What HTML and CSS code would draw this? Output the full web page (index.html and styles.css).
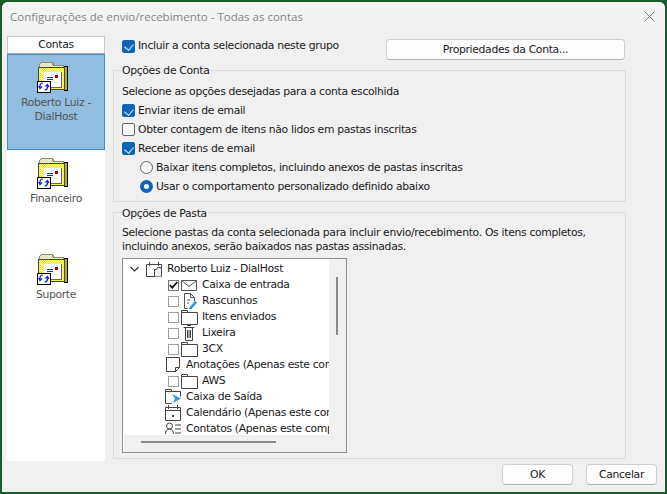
FILE: index.html
```html
<!DOCTYPE html>
<html lang="pt-BR">
<head>
<meta charset="utf-8">
<title>Configurações de envio/recebimento</title>
<link rel="stylesheet" href="styles.css">
</head>
<body>
<svg class="defs" width="0" height="0" aria-hidden="true">
  <defs>
    <pattern id="dither" width="2" height="2" patternUnits="userSpaceOnUse">
      <rect width="2" height="2" fill="#e8e830"/>
      <rect width="1" height="1" fill="#fbfb98"/>
      <rect x="1" y="1" width="1" height="1" fill="#fbfb98"/>
    </pattern>
    <symbol id="acct" viewBox="0 0 38 32">
      <g shape-rendering="crispEdges">
        <path d="M4 1h12v1h1v2h10v3H2V3h1V2h1z" fill="#8c8c70"/>
        <path d="M4 2h11v2h1v1h10v2H3V3h1z" fill="#ece8c8"/>
        <rect x="27" y="5" width="4" height="25" fill="#000"/>
        <rect x="28" y="6" width="2" height="23" fill="#b8b800"/>
        <rect x="1" y="6" width="27" height="23" fill="#444"/>
        <rect x="2" y="7" width="25" height="21" fill="url(#dither)"/>
        <rect x="7" y="11" width="18" height="16" fill="#666"/>
        <rect x="7" y="11" width="17" height="15" fill="#fff"/>
        <rect x="18" y="14" width="3" height="3" fill="#b00000"/>
        <rect x="10" y="16" width="6" height="1" fill="#1c34c8"/>
        <rect x="10" y="18" width="6" height="1" fill="#1c34c8"/>
        <rect x="0" y="20" width="14" height="12" fill="#000"/>
        <rect x="1" y="21" width="12" height="10" fill="#fff"/>
      </g>
      <path d="M3 27v-2a3 3 0 0 1 3-3M1.500 25l1.500 2.500 2-2" fill="none" stroke="#1020d0" stroke-width="1.200"/>
      <path d="M10.500 24v2a3 3 0 0 1-3 3M12 26l-1.500-2.500-2 2" fill="none" stroke="#1020d0" stroke-width="1.200"/>
    </symbol>
    <symbol id="folder" viewBox="0 0 17 16">
      <path d="M.500 15.500V1.500h6v2h10v12z" fill="none" stroke="#444"/>
      <path d="M.500 3.500h6" stroke="#444"/>
    </symbol>
  </defs>
</svg>
<div class="window">
  <header class="titlebar">
    <span class="title">Configurações de envio/recebimento - Todas as contas</span>
    <svg class="close" width="11" height="11" viewBox="0 0 11 11"><path d="M.5.500l10 10M10.500.500l-10 10" stroke="#777" fill="none"/></svg>
  </header>
  <div class="content">
    <aside class="sidebar">
      <div class="side-head">Contas</div>
      <div class="side-item selected">
        <svg class="acct" width="38" height="32"><use href="#acct"/></svg>
        <span>Roberto Luiz -<br>DialHost</span>
      </div>
      <div class="side-item">
        <svg class="acct" width="38" height="32"><use href="#acct"/></svg>
        <span>Financeiro</span>
      </div>
      <div class="side-item">
        <svg class="acct" width="38" height="32"><use href="#acct"/></svg>
        <span>Suporte</span>
      </div>
    </aside>
    <main class="main">
      <div class="toprow">
        <label class="check-line short"><i class="cb on"></i>Incluir a conta selecionada neste grupo</label>
        <button class="btn props">Propriedades da Conta...</button>
      </div>
      <section class="group g1">
        <h2 class="legend">Opções de Conta</h2>
        <div class="line">Selecione as opções desejadas para a conta escolhida</div>
        <label class="check-line line"><i class="cb on"></i>Enviar itens de email</label>
        <label class="check-line line"><i class="cb"></i>Obter contagem de itens não lidos em pastas inscritas</label>
        <label class="check-line line"><i class="cb on"></i>Receber itens de email</label>
        <label class="check-line line sub"><i class="rb"></i>Baixar itens completos, incluindo anexos de pastas inscritas</label>
        <label class="check-line line sub"><i class="rb on"></i>Usar o comportamento personalizado definido abaixo</label>
      </section>
      <section class="group g2">
        <h2 class="legend">Opções de Pasta</h2>
        <p class="desc">Selecione pastas da conta selecionada para incluir envio/recebimento. Os itens completos,<br>incluindo anexos, serão baixados nas pastas assinadas.</p>
        <div class="tree">
          <div class="tree-top">
            <ul class="rows">
              <li class="row root">
                <svg class="chev" width="9" height="6" viewBox="0 0 9 6"><path d="M.5 1l4 4 4-4" fill="none" stroke="#333" stroke-width="1.200"/></svg>
                <svg class="ico" width="17" height="16" viewBox="0 0 17 16"><path d="M.5 3.500h15v12H.5zM3.500 1v4M12.500 1v4" fill="none" stroke="#444"/><path d="M8.500 15.500v-7h2l1-2h3l1 2v7" fill="#f0f0f0" stroke="#444"/></svg>
                <span>Roberto Luiz - DialHost</span>
              </li>
              <li class="row lv2">
                <i class="tick on"><svg width="9" height="8" viewBox="0 0 9 8"><path d="M.7 4l2.600 2.700L8.300 1" fill="none" stroke="#111" stroke-width="1.800"/></svg></i>
                <svg class="ico" width="17" height="16" viewBox="0 0 17 16"><path d="M.5 3.500h15v10H.5zM.5 3.500l7.500 6 7.500-6" fill="none" stroke="#555"/></svg>
                <span>Caixa de entrada</span>
              </li>
              <li class="row lv2">
                <i class="tick"></i>
                <svg class="ico" width="17" height="16" viewBox="0 0 17 16"><path d="M3.500 15.500V.5h6l4 4v4M9.500.5v4h4M3.500 15.500h3M6 7h3M6 10h2" fill="none" stroke="#555"/><path d="M8 15l6-7 2 1.500-6 7-2.500.5z" fill="#2f8fd8"/></svg>
                <span>Rascunhos</span>
              </li>
              <li class="row lv2">
                <i class="tick"></i>
                <svg class="ico" width="17" height="16"><use href="#folder"/></svg>
                <span>Itens enviados</span>
              </li>
              <li class="row lv2">
                <i class="tick"></i>
                <svg class="ico" width="17" height="16" viewBox="0 0 17 16"><path d="M2.500 2.500h11M4.500 2.500v13h7v-13M6 .5h4M6.500 5v8M8 5v8M9.500 5v8" fill="none" stroke="#444"/></svg>
                <span>Lixeira</span>
              </li>
              <li class="row lv2">
                <i class="tick"></i>
                <svg class="ico" width="17" height="16"><use href="#folder"/></svg>
                <span>3CX</span>
              </li>
              <li class="row lv1">
                <svg class="ico" width="17" height="16" viewBox="-1 0 17 16"><path d="M.5.500h13v10l-4 4H.5zM13.500 10.500h-4v4" fill="none" stroke="#444"/></svg>
                <span>Anotações (Apenas este computador)</span>
              </li>
              <li class="row lv2">
                <i class="tick"></i>
                <svg class="ico" width="17" height="16"><use href="#folder"/></svg>
                <span>AWS</span>
              </li>
              <li class="row lv1">
                <svg class="ico" width="17" height="16" viewBox="0 0 17 16"><path d="M.5 14.500V.5h6v2h9v5M.5 14.500h6M.5 2.500h6" fill="none" stroke="#444"/><path d="M7 5l9 4.500-8 4.500 2-4.500z" fill="#3a96dc"/></svg>
                <span>Caixa de Saída</span>
              </li>
              <li class="row lv1">
                <svg class="ico" width="17" height="16" viewBox="0 0 17 16"><path d="M.5 2.500h15v13H.5zM.5 5.500h15M3.500 0v4M12.500 0v4" fill="none" stroke="#444"/><rect x="7" y="10" width="2" height="2" fill="#444"/></svg>
                <span>Calendário (Apenas este computador)</span>
              </li>
              <li class="row lv1">
                <svg class="ico" width="17" height="16" viewBox="0 0 17 16"><circle cx="4.500" cy="5" r="3" fill="none" stroke="#444"/><path d="M.5 13c0-3 1.500-5 4-5s4 2 4 5M10 4h6M10 8h6M10 12h6" fill="none" stroke="#444"/></svg>
                <span>Contatos (Apenas este computador)</span>
              </li>
            </ul>
            <div class="vscroll"><div class="vthumb"></div></div>
          </div>
          <div class="hscroll"><div class="hthumb"></div></div>
        </div>
      </section>
    </main>
  </div>
  <footer class="footer">
    <button class="btn foot">OK</button>
    <button class="btn foot">Cancelar</button>
  </footer>
</div>
</body>
</html>
```
FILE: styles.css
```css
* { box-sizing: border-box; }
html, body { margin: 0; height: 494px; overflow: hidden; }
body {
  background: #1d5a2a;
  padding: 2px;
  font: 10.8px/14px "DejaVu Sans", sans-serif;
  letter-spacing: -0.32px;
  color: #1a1a1a;
}
.defs { display: block; height: 0; }
.window {
  width: 663px;
  height: 490px;
  background: #f0f0f0;
  border-radius: 6px 6px 0 0;
  display: flex;
  flex-direction: column;
}
.titlebar {
  height: 29px;
  flex: none;
  background: #f3f3f3;
  border-radius: 6px 6px 0 0;
  display: flex;
  align-items: center;
  justify-content: space-between;
  padding: 0 10px 0 8px;
}
.title {
  font: 11.5px/16px "Open Sans", sans-serif;
  letter-spacing: 0;
  color: #858585;
}
.close { margin-top: -1px; }
.content {
  height: 433px;
  flex: none;
  display: flex;
  gap: 8px;
  padding: 5px 0 0 5px;
}
.sidebar {
  width: 98px;
  height: 425px;
  flex: none;
  background: #fff;
}
.side-head {
  height: 18px;
  border: 1px solid #c8c8c8;
  border-bottom-color: #a8a8a8;
  background: #fff;
  text-align: center;
  line-height: 16px;
  color: #222;
}
.side-item {
  height: 96px;
  padding-top: 7px;
  display: flex;
  flex-direction: column;
  align-items: center;
  text-align: center;
  color: #555;
}
.side-item.selected {
  background: #90bde0;
  border: 1px solid #3f8fce;
  padding-top: 6px;
}
.acct { display: block; margin-bottom: 3px; flex: none; }
.main { width: 513px; flex: none; }
.toprow {
  height: 34px;
  padding: 3px 1px 0 0;
  display: flex;
  justify-content: space-between;
  align-items: flex-start;
}
.check-line { display: flex; align-items: center; }
.short { margin-left: 9px; height: 14px; }
.btn {
  font: inherit;
  letter-spacing: inherit;
  color: #1a1a1a;
  background: #fdfdfd;
  border: 1px solid #d0d0d0;
  border-bottom-color: #b4b4b4;
  border-radius: 4px;
  padding: 0;
}
.props { width: 239px; height: 21px; }
.cb {
  width: 13px;
  height: 13px;
  flex: none;
  margin-right: 3px;
  border-radius: 2px;
  border: 1px solid #666;
  background: #f6f6f6;
  position: relative;
}
.cb.on { background: #0f65b5; border-color: #0f65b5; }
.cb.on::after {
  content: "";
  position: absolute;
  left: 3px;
  top: 1.500px;
  width: 5px;
  height: 7px;
  border: solid #d8e8f6;
  border-width: 0 1px 1px 0;
  transform: rotate(40deg);
}
.rb {
  width: 13px;
  height: 13px;
  flex: none;
  margin-right: 3px;
  border-radius: 50%;
  border: 1px solid #666;
  background: #f6f6f6;
}
.rb.on { background: #fff; border: 4px solid #0f65b5; }
.group {
  border: 1px solid #dcdcdc;
  padding-left: 8px;
}
.g1 { height: 132px; padding-top: 11px; margin-bottom: 10px; }
.g2 { height: 247px; padding-top: 12px; }
.legend {
  display: table;
  margin: -18px 0 4px 0;
  padding: 0 1px 0 0;
  background: #f0f0f0;
  font: inherit;
  color: #1a1a1a;
  height: 14px;
}
.g2 .legend { margin-bottom: 5px; }
.line { height: 19px; line-height: 19px; }
.sub { padding-left: 18px; }
.desc { margin: 0 0 4px; height: 28px; }
.tree {
  width: 225px;
  height: 195px;
  border: 1px solid #8d8d8d;
  background: #fff;
  display: flex;
  flex-direction: column;
}
.tree-top { height: 176px; display: flex; flex: none; }
.rows {
  list-style: none;
  margin: 0;
  padding: 2px 0 0;
  width: 206px;
  flex: none;
  overflow: hidden;
}
.row {
  height: 16px;
  display: flex;
  align-items: center;
  white-space: nowrap;
}
.root { padding-left: 7px; }
.lv2 { padding-left: 45px; }
.lv1 { padding-left: 42px; }
.chev { margin-right: 7px; flex: none; }
.ico { flex: none; margin-right: 4px; }
.tick {
  width: 11px;
  height: 11px;
  flex: none;
  margin-right: 2px;
  border: 1px solid #a0a0a0;
  background: #fff;
  display: flex;
  align-items: center;
  justify-content: center;
}
.tick.on { border-color: #777; }
.vscroll { width: 17px; background: #f0f0f0; padding: 18px 0 0 7px; }
.vthumb { width: 2px; height: 58px; background: #8a8a8a; }
.hscroll { height: 17px; margin-left: 1px; background: #f0f0f0; padding: 6px 0 0 17px; }
.hthumb { width: 135px; height: 2px; background: #8a8a8a; }
.footer {
  flex: 1;
  display: flex;
  justify-content: flex-end;
  gap: 13px;
  padding: 0 8px 0 0;
}
.foot { width: 71px; height: 21px; }
```
